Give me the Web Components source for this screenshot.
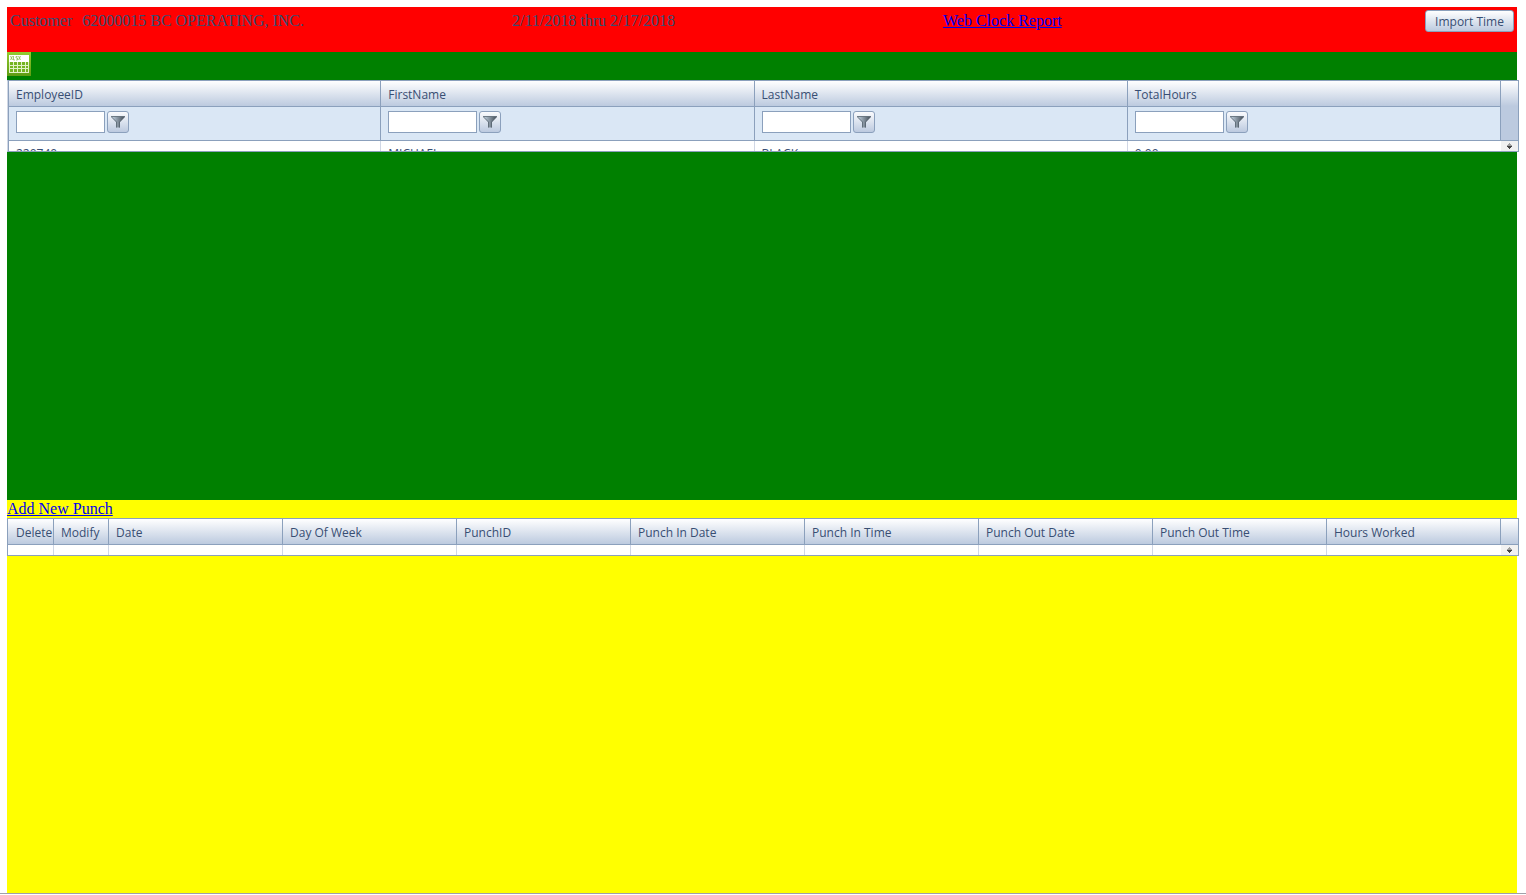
<!DOCTYPE html>
<html lang="en">
<head>
<meta charset="utf-8">
<title>Web Clock</title>
<style>
body{margin:0;background:#fff;font-family:"Liberation Serif",serif;font-size:16px;line-height:18px}
</style>
</head>
<body>
<time-page></time-page>
<script>
const define = (name, html, setup) => customElements.define(name, class extends HTMLElement {
  connectedCallback() {
    if (this.shadowRoot) return;
    const t = document.createElement('template');
    t.innerHTML = html;
    this.attachShadow({mode: 'open'}).append(t.content.cloneNode(true));
    if (setup) setup(this, this.shadowRoot);
  }
});

define('import-button', `
<style>
:host{display:block}
button{display:block;box-sizing:border-box;height:22px;min-width:89px;padding:1px 8px 0;border:1px solid #8ba0bc;border-radius:3px;
background:linear-gradient(#fff,#bccadf);color:#384e73;font:12px/20px "Open Sans",sans-serif;white-space:nowrap}
</style>
<button type="button"><slot></slot></button>`);

define('filter-box', `
<style>
:host{display:flex;gap:2px}
input{box-sizing:border-box;width:89px;height:22px;margin:0;padding:2px 5px;border:1px solid #8ba0bc;border-radius:0;background:#fff;font:12px "Open Sans",sans-serif;color:#384e73}
button{box-sizing:border-box;width:22px;height:22px;padding:0;border:1px solid #8ba0bc;border-radius:3px;background:linear-gradient(#fafbfd,#bccadf);display:grid;place-items:center}
svg{display:block}
</style>
<input type="text"><button type="button">
<svg width="14" height="12" viewBox="0 0 14 12" aria-hidden="true"><defs><linearGradient id="g"><stop offset=".15" stop-color="#b4c3d1"/><stop offset="1" stop-color="#3e4852"/></linearGradient></defs>
<path d="M0 .5h14L9 6v5.500H5V6z" fill="url(#g)"/><path d="M0 .5h14M.5 1L5.500 6v5.500M13.500 1L8.500 6v5.500" fill="none" stroke="#56636f" stroke-width=".8"/></svg></button>`,
(host, root) => {
  const label = host.getAttribute('label');
  root.querySelector('input').setAttribute('aria-label', label);
  root.querySelector('button').setAttribute('aria-label', 'Filter ' + label);
});

define('data-grid', `
<style>
:host{display:flex;overflow:hidden;margin-right:-2px;border:1px solid #8ba0bc;background:#fff;color:#384e73;font-family:"Open Sans",sans-serif;font-size:12px}
:host([filters]){border-left-color:#d0d7e5}
.view{flex:1;min-width:0;overflow:hidden}
:host([filters]) .view{height:70px}
:host(:not([filters])) .view{height:36px}
table{width:100%;table-layout:fixed;border-collapse:separate;border-spacing:0}
th,td{box-sizing:border-box;padding:0 0 0 7px;text-align:left;font-weight:400;white-space:nowrap;overflow:hidden}
th{height:26px;line-height:17px;padding-top:2px;background:linear-gradient(#fff,#bccadf);border-bottom:1px solid #8ba0bc;border-right:1px solid #8ba0bc}
.filter td{height:34px;background:#dae7f5;border-bottom:1px solid #8ba0bc;border-right:1px solid #8ba0bc}
.filter filter-box{margin-top:-4px}
.row td{height:26px;border-right:1px solid #d0d7e5}
.row td:last-child{border-right-color:#fff}
:host([filters]) :is(th,td):first-child{border-left:1px solid #8ba0bc}
:host(:not([filters])) :is(th,td):first-child{padding-left:8px}
.side{width:17px;display:flex;flex-direction:column}
.cap{height:25px;background:linear-gradient(#fff,#bccadf)}
.fill{height:34px;background:#bccadf;display:none}
:host([filters]) .fill{display:block}
.bar{flex:1;display:grid;place-items:center;background:#f1f1f1;border-top:1px solid #8ba0bc}
svg{display:block}
</style>
<div class="view"><table><colgroup></colgroup><thead><tr class="head"></tr></thead><tbody></tbody></table></div>
<div class="side"><div class="cap"></div><div class="fill"></div><div class="bar">
<svg width="7" height="6" viewBox="0 0 7 6" aria-hidden="true"><path d="M3 0h1v1h1v1h1v1H1V2h1V1h1z" fill="#a0a0a0"/><path d="M1 3h5v1H5v1H4v1H3V5H2V4H1z" fill="#444"/></svg></div></div>`,
(host, root) => {
  const list = n => (host.getAttribute(n) || '').split('|');
  const cols = list('columns');
  const widths = list('widths');
  const cells = list('row');
  root.querySelector('colgroup').innerHTML = cols.map((c, i) => widths[i] ? `<col style="width:${widths[i]}">` : '<col>').join('');
  root.querySelector('.head').innerHTML = cols.map(c => `<th scope="col">${c}</th>`).join('');
  root.querySelector('tbody').innerHTML =
    (host.hasAttribute('filters') ? '<tr class="filter">' + cols.map(c => `<td><filter-box label="${c}"></filter-box></td>`).join('') + '</tr>' : '') +
    '<tr class="row">' + cols.map((c, i) => `<td>${cells[i] || ''}</td>`).join('') + '</tr>';
});

define('excel-button', `
<style>
:host{display:block}
button{display:block;width:24px;height:24px;padding:0;border:0;background:none}
svg{display:block}
</style>
<button type="button" aria-label="Export to Excel"><svg width="24" height="24" viewBox="0 0 24 24" aria-hidden="true">
<defs><linearGradient id="e" x2="0" y2="1"><stop offset="0" stop-color="#92cc30"/><stop offset="1" stop-color="#5e9c12"/></linearGradient></defs>
<path fill="url(#e)" d="M0 0h24v24H0z"/><path fill="#fff" d="M2 3h20v7H2z"/><path fill="#e2f2c8" d="M2 10h20v11H2z"/>
<path d="M3.500 4l2 4m0-4l-2 4M6.500 4v4h1.500M10.500 4.500H9v1.500h1.500V8H9M11.500 4l2 4m0-4l-2 4" fill="none" stroke="#7db83c" stroke-width=".7"/>
<path fill="#74b422" d="M3 10h3v3H3zM7 10h3v3H7zM11 10h3v3h-3zM15 10h3v3h-3zM19 10h2v3h-2zM3 14h3v2H3zM7 14h3v2H7zM11 14h3v2h-3zM15 14h3v2h-3zM19 14h2v2h-2zM3 17h3v3H3zM7 17h3v3H7zM11 17h3v3h-3zM15 17h3v3h-3zM19 17h2v3h-2z"/></svg></button>`);

define('time-page', `
<style>
:host{display:flex;flex-direction:column;min-height:100vh}
main{flex:1;display:flex;flex-direction:column;margin:7px 9px 0 7px}
header{box-sizing:border-box;height:45px;padding:3px;background:red;color:#384e73;display:grid;grid-template-columns:502fr 431fr 571fr;align-items:start}
header p{margin:2px 0 0}
.customer{display:flex;gap:10px}
.end{display:flex;justify-content:space-between}
.end a{margin-top:2px}
a{color:#00e}
.people{height:448px;background:green}
.people data-grid{margin-top:4px}
.punches{flex:1;background:#ff0}
.punches a{display:block;width:max-content}
footer{height:1px;border-top:1px solid #a0a0a8}
</style>
<main>
<header><p class="customer"><span>Customer</span><span>62000015 BC OPERATING, INC.</span></p><p>2/11/2018 thru 2/17/2018</p>
<div class="end"><a href="#report">Web Clock Report</a><import-button>Import Time</import-button></div></header>
<section class="people"><excel-button></excel-button>
<data-grid filters columns="EmployeeID|FirstName|LastName|TotalHours" widths="calc(25% + 1px)" row="220740|MICHAEL|BLACK|0.00"></data-grid></section>
<section class="punches"><a href="#add">Add New Punch</a>
<data-grid columns="Delete|Modify|Date|Day Of Week|PunchID|Punch In Date|Punch In Time|Punch Out Date|Punch Out Time|Hours Worked" widths="46px|55px"></data-grid></section>
</main>
<footer></footer>`);
</script>
</body>
</html>
